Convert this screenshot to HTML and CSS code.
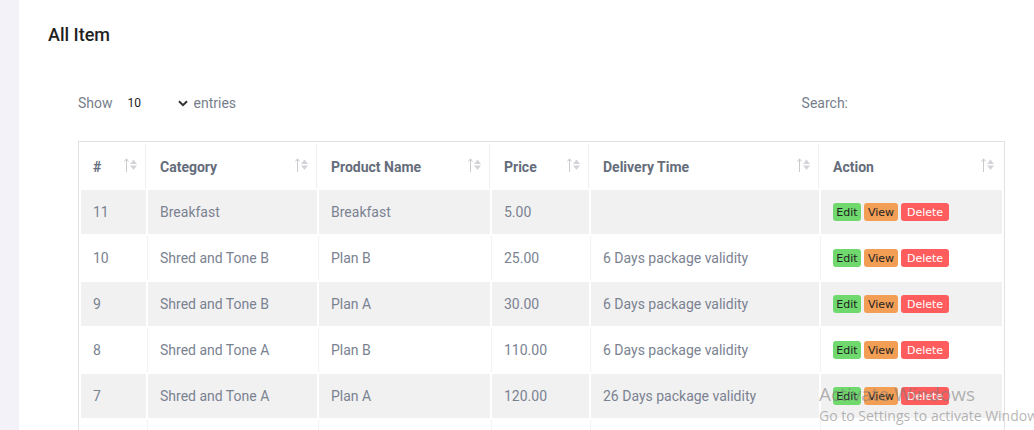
FILE: index.html
```html
<!DOCTYPE html>
<html>
<head>
<meta charset="utf-8">
<link rel="stylesheet" href="styles.css">
</head>
<body>
<div class="page">
  <aside class="side"></aside>
  <main class="card">
    <h2 class="title">All Item</h2>
    <div class="wrap">
      <div class="toolbar">
        <div class="length">
          <span>Show</span>
          <span class="select"><span class="val">10</span>
            <svg class="chev" width="10" height="7" viewBox="0 0 10 7"><path d="M1 1.2 L5 5.2 L9 1.2" fill="none" stroke="#333" stroke-width="2"/></svg>
          </span>
          <span>entries</span>
        </div>
        <div class="search">
          <label>Search:</label>
          <span class="input"></span>
        </div>
      </div>
      <table class="grid">
        <colgroup>
          <col class="c1"><col class="c2"><col class="c3"><col class="c4"><col class="c5"><col class="c6">
        </colgroup>
        <thead>
          <tr>
            <th><span>#</span><svg class="sort" width="14" height="16" viewBox="0 0 14 16"><path d="M2.5 15 V2" stroke="#c9cacd" stroke-width="1"/><path d="M0.5 4.5 L2.5 1.8 L4.5 4.5" fill="none" stroke="#c9cacd" stroke-width="1"/><path d="M6 7 L9.5 2.5 L13 7 Z" fill="#d3d4d7"/><path d="M6 8.5 L9.5 13 L13 8.5 Z" fill="#d3d4d7"/></svg></th>
            <th><span>Category</span><svg class="sort" width="14" height="16" viewBox="0 0 14 16"><path d="M2.5 15 V2" stroke="#c9cacd" stroke-width="1"/><path d="M0.5 4.5 L2.5 1.8 L4.5 4.5" fill="none" stroke="#c9cacd" stroke-width="1"/><path d="M6 7 L9.5 2.5 L13 7 Z" fill="#d3d4d7"/><path d="M6 8.5 L9.5 13 L13 8.5 Z" fill="#d3d4d7"/></svg></th>
            <th><span>Product Name</span><svg class="sort" width="14" height="16" viewBox="0 0 14 16"><path d="M2.5 15 V2" stroke="#c9cacd" stroke-width="1"/><path d="M0.5 4.5 L2.5 1.8 L4.5 4.5" fill="none" stroke="#c9cacd" stroke-width="1"/><path d="M6 7 L9.5 2.5 L13 7 Z" fill="#d3d4d7"/><path d="M6 8.5 L9.5 13 L13 8.5 Z" fill="#d3d4d7"/></svg></th>
            <th><span>Price</span><svg class="sort" width="14" height="16" viewBox="0 0 14 16"><path d="M2.5 15 V2" stroke="#c9cacd" stroke-width="1"/><path d="M0.5 4.5 L2.5 1.8 L4.5 4.5" fill="none" stroke="#c9cacd" stroke-width="1"/><path d="M6 7 L9.5 2.5 L13 7 Z" fill="#d3d4d7"/><path d="M6 8.5 L9.5 13 L13 8.5 Z" fill="#d3d4d7"/></svg></th>
            <th><span>Delivery Time</span><svg class="sort" width="14" height="16" viewBox="0 0 14 16"><path d="M2.5 15 V2" stroke="#c9cacd" stroke-width="1"/><path d="M0.5 4.5 L2.5 1.8 L4.5 4.5" fill="none" stroke="#c9cacd" stroke-width="1"/><path d="M6 7 L9.5 2.5 L13 7 Z" fill="#d3d4d7"/><path d="M6 8.5 L9.5 13 L13 8.5 Z" fill="#d3d4d7"/></svg></th>
            <th><span>Action</span><svg class="sort" width="14" height="16" viewBox="0 0 14 16"><path d="M2.5 15 V2" stroke="#c9cacd" stroke-width="1"/><path d="M0.5 4.5 L2.5 1.8 L4.5 4.5" fill="none" stroke="#c9cacd" stroke-width="1"/><path d="M6 7 L9.5 2.5 L13 7 Z" fill="#d3d4d7"/><path d="M6 8.5 L9.5 13 L13 8.5 Z" fill="#d3d4d7"/></svg></th>
          </tr>
        </thead>
        <tbody>
          <tr class="odd"><td>11</td><td>Breakfast</td><td>Breakfast</td><td>5.00</td><td></td><td><div class="acts"><span class="btn edit">Edit</span><span class="btn view">View</span><span class="btn del">Delete</span></div></td></tr>
          <tr><td>10</td><td>Shred and Tone B</td><td>Plan B</td><td>25.00</td><td>6 Days package validity</td><td><div class="acts"><span class="btn edit">Edit</span><span class="btn view">View</span><span class="btn del">Delete</span></div></td></tr>
          <tr class="odd"><td>9</td><td>Shred and Tone B</td><td>Plan A</td><td>30.00</td><td>6 Days package validity</td><td><div class="acts"><span class="btn edit">Edit</span><span class="btn view">View</span><span class="btn del">Delete</span></div></td></tr>
          <tr><td>8</td><td>Shred and Tone A</td><td>Plan B</td><td>110.00</td><td>6 Days package validity</td><td><div class="acts"><span class="btn edit">Edit</span><span class="btn view">View</span><span class="btn del">Delete</span></div></td></tr>
          <tr class="odd"><td>7</td><td>Shred and Tone A</td><td>Plan A</td><td>120.00</td><td>26 Days package validity</td><td><div class="acts"><span class="btn edit">Edit</span><span class="btn view">View</span><span class="btn del">Delete</span></div></td></tr>
          <tr class="tail"><td></td><td></td><td></td><td></td><td></td><td></td></tr>
        </tbody>
      </table>
    </div>
  </main>
</div>
<div class="watermark">
  <div class="wm1">Activate Windows</div>
  <div class="wm2">Go to Settings to activate Windows.</div>
</div>
</body>
</html>
```

FILE: styles.css
```css
html, body {
  margin: 0;
  padding: 0;
  height: 430px;
  overflow: hidden;
  background: #ffffff;
  font-family: Roboto, "Liberation Sans", Arial, sans-serif;
}

.page {
  display: flex;
  height: 430px;
}

.side {
  width: 19px;
  flex: 0 0 19px;
  background: #f3f2f9;
}

.card {
  flex: 1;
  background: #ffffff;
  border-top-left-radius: 10px;
  padding: 22px 0 0 29px;
  overflow: hidden;
}

.title {
  margin: 0;
  font-size: 18px;
  font-weight: 500;
  color: #1f1f1f;
  line-height: 26px;
}

.wrap {
  padding: 40px 0 0 30px;
  width: 927px;
}

.toolbar {
  display: flex;
  justify-content: space-between;
  align-items: center;
  height: 30px;
  font-size: 14px;
  color: #767e8b;
}

.length {
  display: flex;
  align-items: center;
}

.select {
  display: inline-flex;
  align-items: center;
  width: 63px;
  margin: 0 6px 0 12px;
  color: #222;
  font-size: 12px;
}

.select .val {
  flex: 1;
  padding-left: 3px;
}

.search {
  display: flex;
  align-items: center;
}

.search .input {
  display: inline-block;
  width: 153px;
  height: 24px;
  margin-left: 4px;
}

.grid {
  margin-top: 23px;
  width: 927px;
  border: 1px solid #e1e2e5;
  border-collapse: separate;
  border-spacing: 2px;
  table-layout: fixed;
  font-size: 14px;
  color: #7a8291;
}

.c1 { width: 65px; }
.c2 { width: 169px; }
.c3 { width: 171px; }
.c4 { width: 97px; }
.c5 { width: 228px; }
.c6 { width: 181px; }

.grid th {
  height: 44px;
  padding: 0 7px 0 12px;
  text-align: left;
  font-weight: 700;
  font-size: 14px;
  color: #656d7b;
  border-right: 1px solid #efeff1;
  white-space: nowrap;
}

.grid th:last-child {
  border-right: none;
}

.grid th span {
  display: inline-block;
  vertical-align: middle;
}

.grid th .sort {
  float: right;
}

.grid td {
  height: 44px;
  padding: 0 12px;
  white-space: nowrap;
  overflow: hidden;
  box-shadow: -1px 0 0 #f3f3f5;
}

.grid tr.odd td {
  background: #f1f1f1;
  box-shadow: none;
}

.grid td:first-child {
  box-shadow: none;
}

.acts {
  display: flex;
  gap: 3px;
}

.btn {
  display: inline-flex;
  align-items: center;
  justify-content: center;
  height: 18px;
  border-radius: 3px;
  font-size: 11px;
  font-family: "DejaVu Sans", Verdana, sans-serif;
  color: #222;
}

.btn.edit { width: 28px; background: #6fd96d; }
.btn.view { width: 34px; background: #f39e55; }
.btn.del { width: 48px; background: #ff5d5d; color: #ffffff; }

.watermark {
  position: absolute;
  left: 819px;
  top: 382px;
  color: rgba(120, 120, 120, 0.55);
  font-family: "Open Sans", "Noto Sans", sans-serif;
  white-space: nowrap;
}

.wm1 {
  font-size: 19px;
  line-height: 24px;
}

.wm2 {
  font-size: 14px;
  line-height: 20px;
}
```
